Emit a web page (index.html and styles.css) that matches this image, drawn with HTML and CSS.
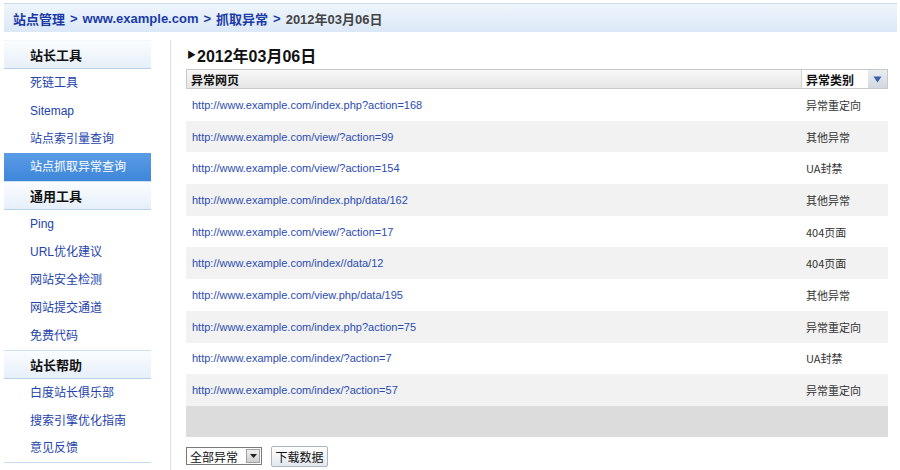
FILE: index.html
```html
<!DOCTYPE html>
<html lang="zh-CN">
<head>
<meta charset="utf-8">
<title>抓取异常</title>
<link rel="stylesheet" href="styles.css">
</head>
<body>
<div class="page">
  <div class="crumb">
    <a class="crumb-link">站点管理</a><span class="sep">&gt;</span><a class="crumb-link">www.example.com</a><span class="sep">&gt;</span><a class="crumb-link">抓取异常</a><span class="sep">&gt;</span><span class="crumb-cur">2012年03月06日</span>
  </div>
  <div class="body">
    <nav class="side">
      <div class="side-head first">站长工具</div>
      <a class="side-item">死链工具</a>
      <a class="side-item">Sitemap</a>
      <a class="side-item">站点索引量查询</a>
      <a class="side-item active">站点抓取异常查询</a>
      <div class="side-head">通用工具</div>
      <a class="side-item">Ping</a>
      <a class="side-item">URL优化建议</a>
      <a class="side-item">网站安全检测</a>
      <a class="side-item">网站提交通道</a>
      <a class="side-item">免费代码</a>
      <div class="side-head">站长帮助</div>
      <a class="side-item">白度站长俱乐部</a>
      <a class="side-item">搜索引擎优化指南</a>
      <a class="side-item last">意见反馈</a>
    </nav>
    <div class="divider"></div>
    <main class="main">
      <h1 class="title"><span class="tri">&#9654;</span>2012年03月06日</h1>
      <div class="grid">
        <div class="gh gh-url">异常网页</div>
        <div class="gh gh-type">异常类别</div>
        <div class="gh gh-btn"><svg width="9" height="7" viewBox="0 0 9 7"><path d="M0.5 0.5 H8.5 L4.5 6.5 Z" fill="#3b5fa8"/></svg></div>

        <div class="row"><a class="url">http://www.example.com/index.php?action=168</a><span class="type">异常重定向</span></div>
        <div class="row alt"><a class="url">http://www.example.com/view/?action=99</a><span class="type">其他异常</span></div>
        <div class="row"><a class="url">http://www.example.com/view/?action=154</a><span class="type">UA封禁</span></div>
        <div class="row alt"><a class="url">http://www.example.com/index.php/data/162</a><span class="type">其他异常</span></div>
        <div class="row"><a class="url">http://www.example.com/view/?action=17</a><span class="type">404页面</span></div>
        <div class="row alt"><a class="url">http://www.example.com/index//data/12</a><span class="type">404页面</span></div>
        <div class="row"><a class="url">http://www.example.com/view.php/data/195</a><span class="type">其他异常</span></div>
        <div class="row alt"><a class="url">http://www.example.com/index.php?action=75</a><span class="type">异常重定向</span></div>
        <div class="row"><a class="url">http://www.example.com/index/?action=7</a><span class="type">UA封禁</span></div>
        <div class="row alt"><a class="url">http://www.example.com/index/?action=57</a><span class="type">异常重定向</span></div>
        <div class="foot-band"></div>
      </div>
      <div class="controls">
        <div class="select"><span class="select-text">全部异常</span><span class="select-arrow"><svg width="7" height="4" viewBox="0 0 7 4"><path d="M0 0 H7 L3.5 4 Z" fill="#222"/></svg></span></div>
        <button class="btn">下载数据</button>
      </div>
    </main>
  </div>
</div>
</body>
</html>
```
FILE: styles.css
```css
* { box-sizing: border-box; }
html, body { margin: 0; padding: 0; background: #fff; }
body {
  font-family: "Liberation Sans", "Noto Sans CJK SC", sans-serif;
  color: #333;
  width: 900px;
  height: 470px;
  overflow: hidden;
}
a { text-decoration: none; cursor: pointer; }
.page { padding: 3px 3px 0 4px; }

.crumb {
  height: 29px;
  border-top: 1px solid #c9dcee;
  background: linear-gradient(#eef5fc, #dbe8f7);
  display: flex;
  align-items: center;
  padding-left: 9px;
  font-weight: bold;
  font-size: 13px;
  font-family: "Liberation Sans", "Noto Sans CJK SC", sans-serif;
}
.crumb-link { color: #1a3aa8; }
.sep { color: #1a3aa8; margin: 0 5px; }
.crumb-cur { color: #444; }

.body { display: flex; margin-top: 8px; }

.side { width: 147px; display: flex; flex-direction: column; }
.side-head {
  height: 29px;
  border-top: 1px solid #cfe0f1;
  border-bottom: 1px solid #b9d3ec;
  background: linear-gradient(#fbfdff, #e6eff9);
  font-family: "Noto Sans CJK SC", sans-serif;
  font-weight: bold;
  font-size: 13px;
  color: #111;
  padding-left: 26px;
  display: flex;
  align-items: center;
}
.side-head.first { border-top-color: #f2f7fc; }
.side-item {
  height: 28px;
  line-height: 16px;
  display: flex;
  align-items: center;
  padding-left: 26px;
  padding-bottom: 1px;
  font-family: "Liberation Sans", "Noto Sans CJK SC", sans-serif;
  font-size: 12px;
  color: #2443aa;
}
.side-item.active {
  background: linear-gradient(#5a9ce6, #3f86da);
  color: #fff;
}
.side-item.last { border-bottom: 1px solid #c7dcef; }

.divider { width: 1px; background: #d2e2f2; margin-left: 19px; height: 430px; }

.main { width: 702px; margin-left: 15px; }
.title {
  margin: 0;
  height: 29px;
  display: flex;
  align-items: center;
  font-family: "Liberation Sans", "Noto Sans CJK SC", sans-serif;
  font-size: 16px;
  font-weight: bold;
  color: #111;
  padding-left: 1px;
}
.tri { font-size: 9px; margin-right: 1px; }

.grid {
  display: grid;
  grid-template-columns: 615px 67px 20px;
}
.gh {
  height: 20px;
  border-top: 1px solid #c8c8c8;
  border-bottom: 1px solid #c8c8c8;
  display: flex;
  align-items: center;
  font-family: "Noto Sans CJK SC", sans-serif;
  font-weight: bold;
  font-size: 12px;
  color: #111;
}
.gh-url {
  background: linear-gradient(#f8f8f8, #e6e6e6);
  border-left: 1px solid #c8c8c8;
  padding-left: 4px;
}
.gh-type {
  background: #fff;
  border-left: 1px solid #d4d4d4;
  padding-left: 4px;
}
.gh-btn {
  background: linear-gradient(#e8ecf1, #d3d9e0);
  border-right: 1px solid #c8c8c8;
  justify-content: center;
}
.row {
  grid-column: 1 / 4;
  height: 31.7px;
  display: grid;
  grid-template-columns: 615px 87px;
  align-items: center;
  font-size: 11px;
}
.row.alt { background: #f2f2f2; }
.url { color: #2b4cb3; padding-left: 6px; font-family: "Liberation Sans", sans-serif; }
.type { color: #333; padding-left: 5px; font-family: "Noto Sans CJK SC", sans-serif; }
.foot-band { grid-column: 1 / 4; height: 31px; background: #dcdcdc; }

.controls { display: flex; align-items: center; margin-top: 9px; gap: 9px; }
.select {
  width: 76px;
  height: 18px;
  border: 1px solid #7a7a7a;
  display: flex;
  align-items: center;
  justify-content: space-between;
  font-family: "Noto Sans CJK SC", sans-serif;
  font-size: 12px;
  color: #111;
  padding: 0 1px 0 3px;
}
.select-arrow {
  width: 14px;
  height: 14px;
  background: linear-gradient(#f0f0f0, #cfcfcf);
  border: 1px solid #a0a0a0;
  display: flex;
  align-items: center;
  justify-content: center;
}
.btn {
  width: 57px;
  height: 21px;
  border: 1px solid #a9b6c4;
  border-radius: 2px;
  background: linear-gradient(#ffffff, #e4e9ef);
  font-family: "Noto Sans CJK SC", sans-serif;
  font-size: 12px;
  color: #111;
  padding: 0;
}
```
